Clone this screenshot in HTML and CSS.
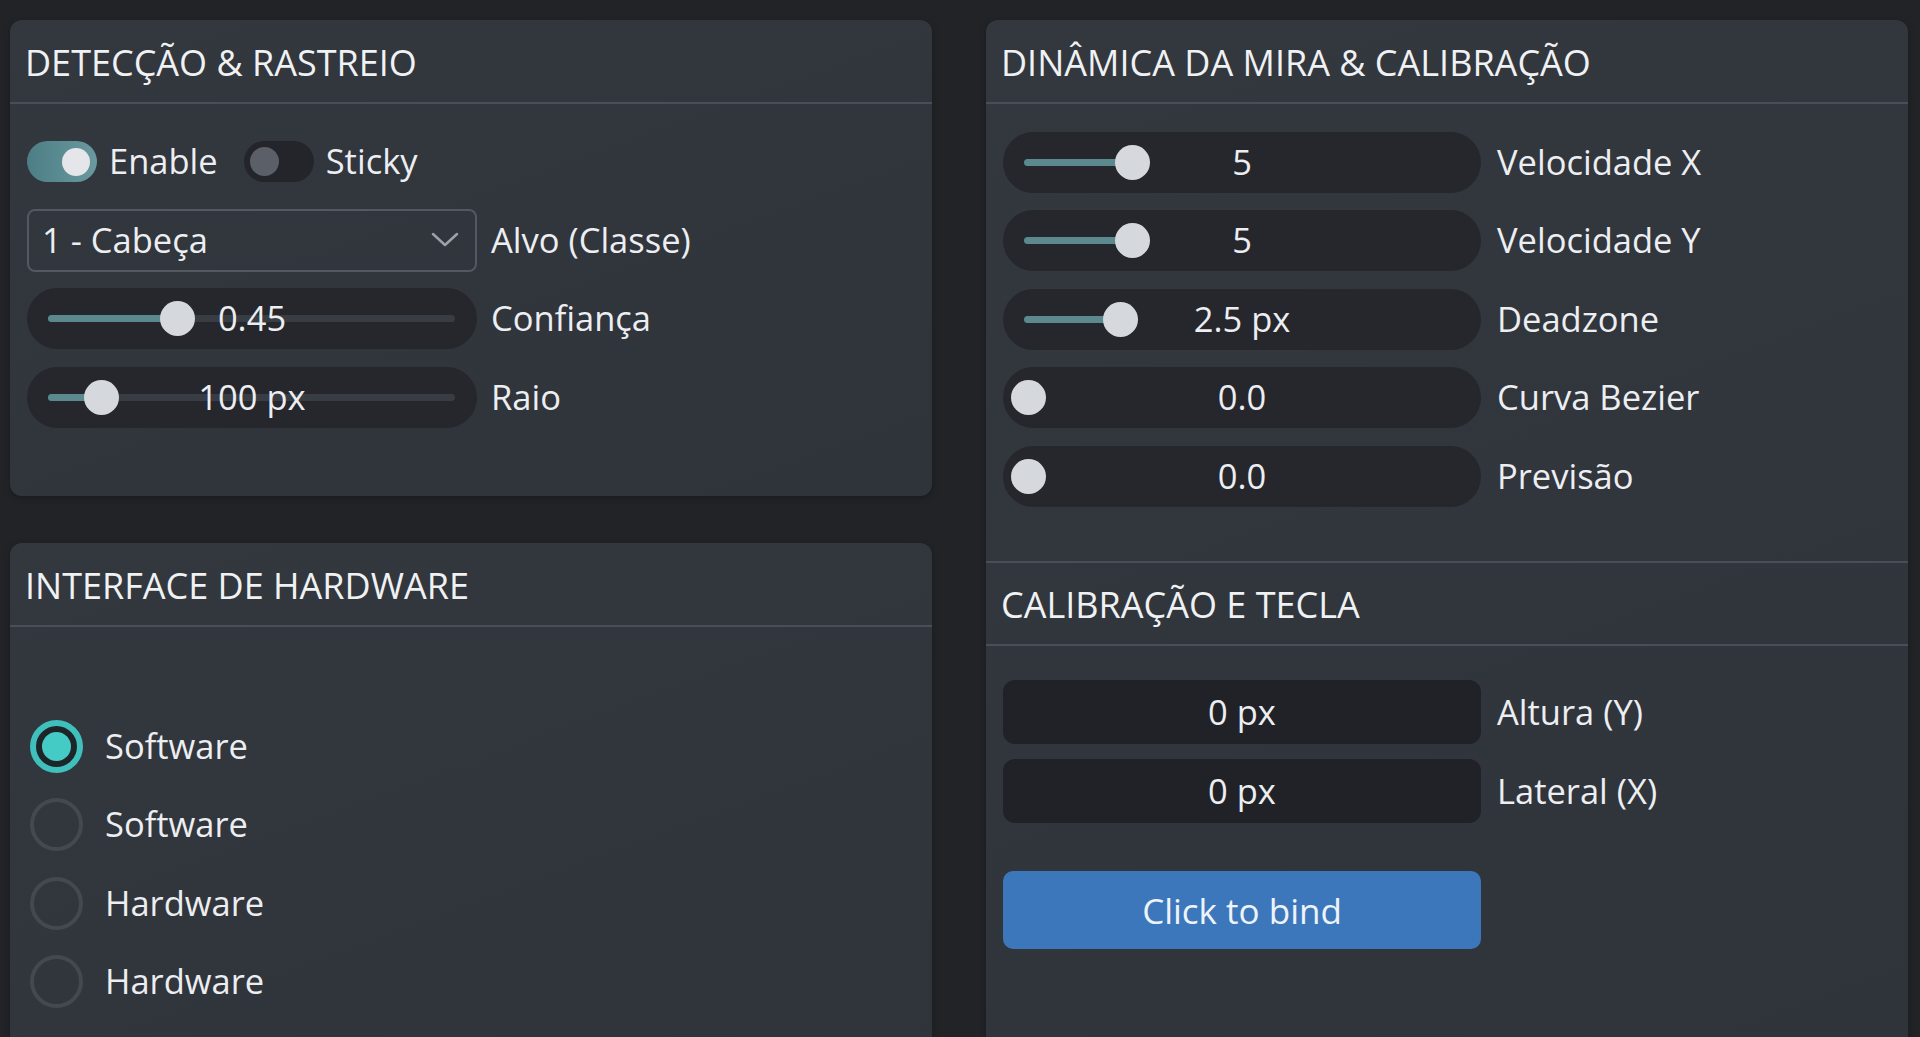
FILE: index.html
```html
<!DOCTYPE html>
<html lang="pt">
<head>
    <meta charset="UTF-8">
    <meta name="viewport" content="width=device-width, initial-scale=1.0">
    <title>Painel de Mira</title>
    <link rel="stylesheet" href="styles.css">
</head>
<body>

    <div class="layout">
        <!-- Left column -->
        <div class="column">

            <!-- Detection panel -->
            <section class="panel panel-detect">
                <h2 class="panel-title">DETECÇÃO &amp; RASTREIO</h2>
                <div class="panel-body">
                    <div class="row">
                        <div class="toggle on"><span class="toggle-knob"></span></div>
                        <span class="toggle-text">Enable</span>
                        <div class="toggle off"><span class="toggle-knob"></span></div>
                        <span class="toggle-text">Sticky</span>
                    </div>
                    <div class="row">
                        <div class="select">
                            <span>1 - Cabeça</span>
                            <svg class="chevron" width="28" height="16" viewBox="0 0 28 16">
                                <polyline points="2,2 14,13 26,2" fill="none" stroke="#9aa1a9" stroke-width="2.5" stroke-linecap="round" stroke-linejoin="round"/>
                            </svg>
                        </div>
                        <span class="label">Alvo (Classe)</span>
                    </div>
                    <div class="row">
                        <div class="slider">
                            <div class="slider-track"><div class="slider-fill" style="width: 129px"></div></div>
                            <span class="slider-knob" style="left: 150px"></span>
                            <span class="slider-value">0.45</span>
                        </div>
                        <span class="label">Confiança</span>
                    </div>
                    <div class="row">
                        <div class="slider">
                            <div class="slider-track"><div class="slider-fill" style="width: 53px"></div></div>
                            <span class="slider-knob" style="left: 74px"></span>
                            <span class="slider-value">100 px</span>
                        </div>
                        <span class="label">Raio</span>
                    </div>
                </div>
            </section>

            <!-- Hardware panel -->
            <section class="panel panel-hw">
                <h2 class="panel-title">INTERFACE DE HARDWARE</h2>
                <div class="panel-body radio-list">
                    <div class="radio-row">
                        <span class="radio checked"></span>
                        <span class="radio-text">Software</span>
                    </div>
                    <div class="radio-row">
                        <span class="radio"></span>
                        <span class="radio-text">Software</span>
                    </div>
                    <div class="radio-row">
                        <span class="radio"></span>
                        <span class="radio-text">Hardware</span>
                    </div>
                    <div class="radio-row">
                        <span class="radio"></span>
                        <span class="radio-text">Hardware</span>
                    </div>
                </div>
            </section>
        </div>

        <!-- Right column -->
        <section class="panel panel-aim">
            <div class="section">
                <h2 class="panel-title">DINÂMICA DA MIRA &amp; CALIBRAÇÃO</h2>
                <div class="panel-body aim-body">
                    <div class="row">
                        <div class="slider wide plain">
                            <div class="slider-track"><div class="slider-fill" style="width: 108px"></div></div>
                            <span class="slider-knob" style="left: 129px"></span>
                            <span class="slider-value">5</span>
                        </div>
                        <span class="label">Velocidade X</span>
                    </div>
                    <div class="row">
                        <div class="slider wide plain">
                            <div class="slider-track"><div class="slider-fill" style="width: 108px"></div></div>
                            <span class="slider-knob" style="left: 129px"></span>
                            <span class="slider-value">5</span>
                        </div>
                        <span class="label">Velocidade Y</span>
                    </div>
                    <div class="row">
                        <div class="slider wide plain">
                            <div class="slider-track"><div class="slider-fill" style="width: 96px"></div></div>
                            <span class="slider-knob" style="left: 117px"></span>
                            <span class="slider-value">2.5 px</span>
                        </div>
                        <span class="label">Deadzone</span>
                    </div>
                    <div class="row">
                        <div class="slider wide plain">
                            <div class="slider-track"><div class="slider-fill" style="width: 0px"></div></div>
                            <span class="slider-knob" style="left: 25px"></span>
                            <span class="slider-value">0.0</span>
                        </div>
                        <span class="label">Curva Bezier</span>
                    </div>
                    <div class="row">
                        <div class="slider wide plain">
                            <div class="slider-track"><div class="slider-fill" style="width: 0px"></div></div>
                            <span class="slider-knob" style="left: 25px"></span>
                            <span class="slider-value">0.0</span>
                        </div>
                        <span class="label">Previsão</span>
                    </div>
                </div>
            </div>

            <div class="section section-last">
                <h2 class="panel-title">CALIBRAÇÃO E TECLA</h2>
                <div class="panel-body calib-body">
                    <div class="field-row">
                        <div class="field">0 px</div>
                        <span class="label">Altura (Y)</span>
                    </div>
                    <div class="field-row">
                        <div class="field">0 px</div>
                        <span class="label">Lateral (X)</span>
                    </div>
                    <button class="bind-button">Click to bind</button>
                </div>
            </div>
        </section>
    </div>

</body>
</html>
```

FILE: styles.css
```css
/* Page */
body {
    margin: 0;
    height: 1037px;
    overflow: hidden;
    background: #212327;
    color: #eceef1;
    font-family: "Open Sans", "Noto Sans", sans-serif;
    font-size: 34.5px;
}

.layout {
    display: grid;
    grid-template-columns: 922px 922px;
    column-gap: 54px;
    padding: 20px 0 0 10px;
    height: 1120px;
    box-sizing: border-box;
}

.column {
    display: flex;
    flex-direction: column;
    gap: 47px;
}

/* Panels */
.panel {
    background: linear-gradient(160deg, #33373e, #2f333a);
    border-radius: 12px;
    box-shadow: 0 2px 6px rgba(0, 0, 0, 0.25);
}

.panel-title {
    margin: 0;
    padding: 25px 15px 21px;
    height: 36px;
    font-size: 36px;
    font-weight: 400;
    line-height: 1;
    color: #eff1f3;
    border-bottom: 2px solid #4a4f57;
}

.panel-body {
    padding: 0 17px;
}

.panel-detect .panel-body {
    padding-top: 27px;
    padding-bottom: 68px;
    display: flex;
    flex-direction: column;
    gap: 17.5px;
}

.panel-hw {
    flex: 1;
}

/* Rows */
.row {
    display: flex;
    align-items: center;
    height: 61px;
}

.label {
    margin-left: 14px;
    line-height: 1;
}

/* Toggle switches */
.toggle {
    position: relative;
    width: 70px;
    height: 41px;
    border-radius: 21px;
    flex-shrink: 0;
}
.toggle.on {
    background: linear-gradient(90deg, #4d7e85, #6a9aa0);
}
.toggle.off {
    background: #23252a;
    margin-left: 26px;
}
.toggle-knob {
    position: absolute;
    top: 50%;
    border-radius: 50%;
}
.toggle.on .toggle-knob {
    right: 7px;
    width: 28px;
    height: 28px;
    margin-top: -14px;
    background: #e4e6e9;
}
.toggle.off .toggle-knob {
    left: 6px;
    width: 29px;
    height: 29px;
    margin-top: -14.5px;
    background: #5b5f67;
}
.toggle-text {
    margin-left: 12px;
    line-height: 1;
}

/* Dropdown */
.select {
    width: 450px;
    height: 63px;
    box-sizing: border-box;
    border: 2px solid #535861;
    border-radius: 8px;
    display: flex;
    align-items: center;
    justify-content: space-between;
    padding: 0 16px 0 13px;
    line-height: 1;
}

/* Sliders */
.slider {
    position: relative;
    width: 450px;
    height: 61px;
    border-radius: 31px;
    background: #25272c;
    display: flex;
    align-items: center;
    justify-content: center;
    flex-shrink: 0;
}
.slider.wide {
    width: 478px;
}
.slider-track {
    position: absolute;
    left: 21px;
    right: 22px;
    top: 50%;
    height: 7px;
    margin-top: -3.5px;
    border-radius: 4px;
    background: #383c43;
}
.slider.plain .slider-track {
    background: transparent;
}
.slider-fill {
    height: 100%;
    border-radius: 4px;
    background: #5c898e;
}
.slider-knob {
    position: absolute;
    top: 50%;
    width: 35px;
    height: 35px;
    margin: -17.5px 0 0 -17.5px;
    border-radius: 50%;
    background: #d5d8dc;
}
.slider-value {
    position: relative;
    line-height: 1;
}

/* Aim section */
.aim-body {
    padding-top: 27.5px;
    padding-bottom: 54.5px;
    display: flex;
    flex-direction: column;
    gap: 17.5px;
}
.aim-body .label,
.calib-body .label {
    margin-left: 16px;
}
.section {
    border-bottom: 2px solid #4a4f57;
}
.section-last {
    border-bottom: none;
}
.section-last .panel-title {
    padding-top: 24px;
    padding-bottom: 21px;
}

/* Calibration */
.calib-body {
    padding-top: 34px;
    display: flex;
    flex-direction: column;
    gap: 15px;
}
.field-row {
    display: flex;
    align-items: center;
}
.field {
    width: 478px;
    height: 64px;
    border-radius: 12px;
    background: #212227;
    display: flex;
    align-items: center;
    justify-content: center;
    line-height: 1;
}
.bind-button {
    margin-top: 33px;
    width: 478px;
    height: 78px;
    border: none;
    border-radius: 10px;
    background: #3d77bb;
    color: #eef3f9;
    font-family: inherit;
    font-size: 35px;
    line-height: 1;
    cursor: pointer;
}

/* Radios */
.radio-list {
    padding-top: 93px;
    padding-left: 20px;
    display: flex;
    flex-direction: column;
    gap: 25.5px;
}
.radio-row {
    display: flex;
    align-items: center;
    height: 53px;
}
.radio {
    position: relative;
    width: 53px;
    height: 53px;
    box-sizing: border-box;
    border: 4px solid #44484f;
    border-radius: 50%;
    flex-shrink: 0;
}
.radio.checked {
    border: 6px solid #3fc0bd;
    background: #1e2529;
}
.radio.checked::after {
    content: "";
    position: absolute;
    top: 50%;
    left: 50%;
    width: 29px;
    height: 29px;
    margin: -14.5px 0 0 -14.5px;
    border-radius: 50%;
    background: #45cbc6;
}
.radio-text {
    margin-left: 22px;
    line-height: 1;
}
```
